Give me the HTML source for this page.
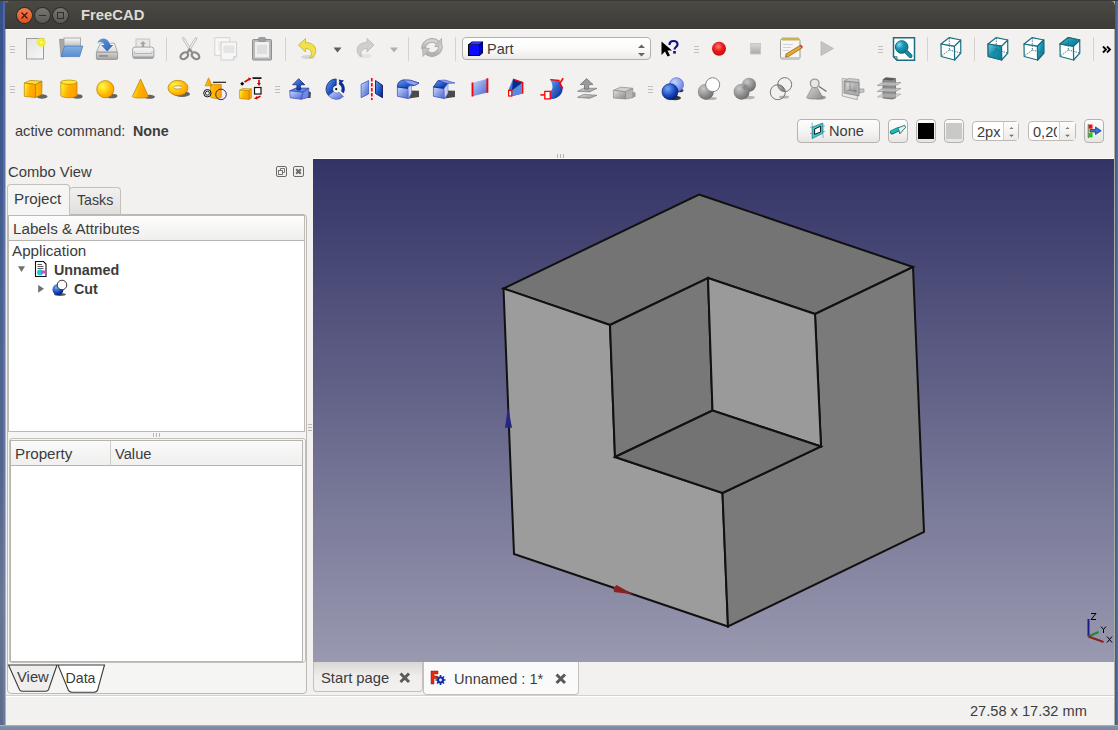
<!DOCTYPE html>
<html><head><meta charset="utf-8">
<style>
*{box-sizing:border-box;margin:0;padding:0}
html,body{width:1118px;height:730px;overflow:hidden;background:#7d879c;font-family:"Liberation Sans",sans-serif;color:#3c3c3c;font-size:14.5px}
.a{position:absolute}
.t{position:absolute;white-space:nowrap;line-height:1}
svg{position:absolute;overflow:visible}
</style></head><body>
<!-- desktop -->
<div class="a" style="left:0;top:0;width:6px;height:730px;background:linear-gradient(90deg,transparent 0,transparent 3.5px,rgba(120,150,200,.35) 3.5px,rgba(120,150,200,.35) 5px,transparent 5px),linear-gradient(#35508a 0,#4b6191 300px,#55658c 480px,#6a7594 600px,#5d6a8a 730px)"></div>
<div class="a" style="left:5px;top:29px;width:1px;height:697px;background:#b5b1ab"></div>
<div class="a" style="left:1114px;top:0;width:4px;height:730px;background:linear-gradient(90deg,#b0aca8 0,#b0aca8 1px,#3d5a88 1px,#5575a5)"></div>
<div class="a" style="left:0;top:725px;width:1118px;height:5px;background:linear-gradient(#b0aca8 0,#b0aca8 1px,#8590aa 1px,#7a86a4)"></div>
<div class="a" style="left:0;top:0;width:1118px;height:1px;background:#3a3935"></div>
<!-- window -->
<div class="a" style="left:5px;top:1px;width:1110px;height:28px;background:linear-gradient(#4a4944,#3c3b37);border-radius:5px 5px 0 0"></div>
<div class="a" style="left:6px;top:29px;width:1108px;height:696px;background:#f2f1f0;border-top:1px solid #fff"></div>


<!-- titlebar buttons -->
<div class="a" style="left:16px;top:7px;width:17px;height:17px;border-radius:50%;background:#2e2d2a"></div>
<div class="a" style="left:17px;top:8px;width:15px;height:15px;border-radius:50%;background:linear-gradient(#f47c4f,#e0531f)"></div>
<svg style="left:17px;top:8px" width="15" height="15"><path d="M4.5 4.5L10.5 10.5M10.5 4.5L4.5 10.5" stroke="#3a1a10" stroke-width="1.2"/></svg>
<div class="a" style="left:34px;top:7px;width:17px;height:17px;border-radius:50%;background:#2e2d2a"></div>
<div class="a" style="left:35px;top:8px;width:15px;height:15px;border-radius:50%;background:linear-gradient(#77766f,#5a5954)"></div>
<div class="a" style="left:39px;top:15px;width:7px;height:1px;background:#2f2e2a"></div>
<div class="a" style="left:52px;top:7px;width:17px;height:17px;border-radius:50%;background:#2e2d2a"></div>
<div class="a" style="left:53px;top:8px;width:15px;height:15px;border-radius:50%;background:linear-gradient(#77766f,#5a5954)"></div>
<div class="a" style="left:57px;top:12px;width:7px;height:7px;border:1.3px solid #2f2e2a"></div>
<div class="t" style="left:81px;top:7.5px;font-size:14.8px;font-weight:bold;color:#dfdbd2">FreeCAD</div>

<!-- toolbar row1 -->
<div class="a" style="left:10px;top:46px;width:5px;height:8px;background:repeating-linear-gradient(#c2bfba 0,#c2bfba 1px,transparent 1px,transparent 3px)"></div><div class="a" style="left:10px;top:86px;width:5px;height:8px;background:repeating-linear-gradient(#c2bfba 0,#c2bfba 1px,transparent 1px,transparent 3px)"></div><div class="a" style="left:694px;top:46px;width:5px;height:8px;background:repeating-linear-gradient(#c2bfba 0,#c2bfba 1px,transparent 1px,transparent 3px)"></div><div class="a" style="left:878px;top:46px;width:5px;height:8px;background:repeating-linear-gradient(#c2bfba 0,#c2bfba 1px,transparent 1px,transparent 3px)"></div><div class="a" style="left:275px;top:86px;width:5px;height:8px;background:repeating-linear-gradient(#c2bfba 0,#c2bfba 1px,transparent 1px,transparent 3px)"></div><div class="a" style="left:648px;top:86px;width:5px;height:8px;background:repeating-linear-gradient(#c2bfba 0,#c2bfba 1px,transparent 1px,transparent 3px)"></div>
<div class="a" style="left:166px;top:37px;width:1px;height:24px;background:#d6d3ce"></div><div class="a" style="left:285px;top:37px;width:1px;height:24px;background:#d6d3ce"></div><div class="a" style="left:408px;top:37px;width:1px;height:24px;background:#d6d3ce"></div><div class="a" style="left:455px;top:37px;width:1px;height:24px;background:#d6d3ce"></div><div class="a" style="left:927px;top:37px;width:1px;height:24px;background:#d6d3ce"></div><div class="a" style="left:974px;top:37px;width:1px;height:24px;background:#d6d3ce"></div><div class="a" style="left:1093px;top:37px;width:1px;height:24px;background:#d6d3ce"></div>
<!-- ICONS1 -->
<svg style="left:24px;top:37px" width="24" height="24">
<defs><linearGradient id="pg" x1="0" y1="0" x2="1" y2="1"><stop offset="0" stop-color="#e2e2e2"/><stop offset="1" stop-color="#f8f8f8"/></linearGradient>
<radialGradient id="glow"><stop offset="0" stop-color="#ffffe0"/><stop offset=".3" stop-color="#f8f020"/><stop offset=".7" stop-color="#f2ea30" stop-opacity=".8"/><stop offset="1" stop-color="#f2ea30" stop-opacity="0"/></radialGradient></defs>
<rect x="2.5" y="1.5" width="17" height="20.5" fill="url(#pg)" stroke="#9a9a9a"/>
<rect x="3" y="22" width="17" height="1" fill="#c8c8c8"/>
<circle cx="17.3" cy="5.3" r="5.5" fill="url(#glow)"/>
</svg>
<svg style="left:59px;top:37px" width="25" height="24">
<defs><linearGradient id="fb" x1="0" y1="0" x2="0" y2="1"><stop offset="0" stop-color="#86b0e0"/><stop offset="1" stop-color="#5a8ed0"/></linearGradient>
<linearGradient id="fp" x1="0" y1="0" x2="0" y2="1"><stop offset="0" stop-color="#fafafa"/><stop offset="1" stop-color="#b8b8b8"/></linearGradient></defs>
<path d="M0.5 2.3H5.5V19.6H2z" fill="#a8a8a8" stroke="#8a8a8a" stroke-width=".7"/>
<rect x="5" y="1" width="16.5" height="9" fill="url(#fp)" stroke="#9a9a9a" stroke-width=".8"/>
<path d="M2.1 19.6L5.6 9.1H23.8L20.6 19.6z" fill="url(#fb)" stroke="#4a7ec0" stroke-width=".8"/>
</svg>
<svg style="left:96px;top:37px" width="24" height="24">
<defs><linearGradient id="dr" x1="0" y1="0" x2="0" y2="1"><stop offset="0" stop-color="#f4f4f4"/><stop offset="1" stop-color="#dcdcdc"/></linearGradient>
<linearGradient id="dr2" x1="0" y1="0" x2="0" y2="1"><stop offset="0" stop-color="#d4d4d4"/><stop offset="1" stop-color="#a4a4a4"/></linearGradient>
<linearGradient id="arw" x1="0" y1="0" x2="1" y2="1"><stop offset="0" stop-color="#6a9ad8"/><stop offset="1" stop-color="#2a62b8"/></linearGradient></defs>
<path d="M4.3 6.2H18.4L21.6 15.2H0.4z" fill="url(#dr)" stroke="#a0a0a0" stroke-width=".8"/>
<rect x="0.4" y="15.2" width="21.2" height="7.2" rx="1" fill="url(#dr2)" stroke="#8a8a8a" stroke-width=".8"/>
<rect x="3" y="18" width="9" height="1.8" fill="#909090"/>
<path d="M1.2 6.4C3 1.5 9 -0.5 12.5 4.5L14.5 8H17.2L11.2 14.5 5 8H8.2C7.5 5 4 4 1.2 6.4z" fill="url(#arw)"/>
</svg>
<svg style="left:132px;top:37px" width="24" height="24">
<defs><linearGradient id="pr" x1="0" y1="0" x2="0" y2="1"><stop offset="0" stop-color="#f6f6f6"/><stop offset=".6" stop-color="#e4e4e4"/><stop offset="1" stop-color="#c0c0c0"/></linearGradient></defs>
<rect x="4" y="2" width="13.8" height="10" fill="#e8e8e8" stroke="#b8b8b8" stroke-width=".8"/>
<path d="M11 4L8 7H9.8V11H12.2V7H14z" fill="#a4a4a4"/>
<rect x="0.6" y="10.1" width="21.3" height="11.3" rx="2.5" fill="url(#pr)" stroke="#9a9a9a" stroke-width=".9"/>
<path d="M2.5 14.5V16.5H20V14.5" fill="none" stroke="#a8a8a8" stroke-width=".8"/>
<rect x="1" y="19.5" width="20.5" height="2" rx="1" fill="#a0a0a0"/>
</svg>
<svg style="left:178px;top:37px" width="24" height="24">
<path d="M4.2 1.2L5.8 0.5 14 13.5 12.6 15z" fill="#f4f4f4" stroke="#a8a8a8" stroke-width=".7"/>
<path d="M19.2 1.2L17.6 0.5 9.4 13.5 10.8 15z" fill="#f4f4f4" stroke="#a8a8a8" stroke-width=".7"/>
<ellipse cx="6.3" cy="18.8" rx="4.2" ry="2.9" transform="rotate(-35 6.3 18.8)" fill="none" stroke="#8a8a8a" stroke-width="2.2"/>
<ellipse cx="17.5" cy="18.8" rx="4.2" ry="2.9" transform="rotate(35 17.5 18.8)" fill="none" stroke="#8a8a8a" stroke-width="2.2"/>
<path d="M9.5 15.5L11.7 12.5 14 15.5" fill="none" stroke="#8a8a8a" stroke-width="2"/>
</svg>
<svg style="left:214px;top:37px" width="24" height="24">
<rect x="0.8" y="0.8" width="15" height="17.5" fill="#f8f8f8" stroke="#d4d4d4"/>
<path d="M4 5H7M4 7H7M4 9H7M4 11H7M4 13H7" stroke="#d8d8d8" stroke-width=".7"/>
<path d="M7 5H22.6V19.5L19.5 23H7z" fill="#f6f6f6" stroke="#cfcfcf"/>
<rect x="9.5" y="8.5" width="11" height="7.5" fill="#e4e4e4"/>
<path d="M19.5 23V19.5H22.6" fill="#e0e0e0" stroke="#cfcfcf" stroke-width=".7"/>
</svg>
<svg style="left:250px;top:37px" width="24" height="24">
<rect x="2.5" y="2.5" width="19" height="20.5" rx="1" fill="#b8b8b8" stroke="#8e8e8e"/>
<rect x="5" y="5" width="14" height="15.5" fill="#f0f0f0"/>
<rect x="8.5" y="0.5" width="7" height="4" rx="1" fill="#9e9e9e" stroke="#888" stroke-width=".6"/>
<rect x="7" y="8" width="10" height="9" fill="#dedede"/>
</svg>
<svg style="left:297px;top:37px" width="24" height="24">
<ellipse cx="11" cy="20" rx="7" ry="2" fill="#d6d5d2"/>
<path d="M1.5 8L8.5 1.5V5.5C16 5.5 20 10 18.5 16 17.5 19 15 21 12.5 21 15.5 18 15.5 11.5 8.5 11.5V15z" fill="#f2e04a" stroke="#c8b424" stroke-width=".8"/>
</svg>
<svg style="left:331px;top:46px" width="12" height="8"><path d="M2.5 1.5h8l-4 5z" fill="#5d5d5d"/></svg>
<svg style="left:355px;top:37px" width="24" height="24">
<ellipse cx="10" cy="19" rx="7" ry="2" fill="#e4e3e0"/>
<path d="M19 8L12 1.5V5.5C4.5 5.5 1 10 2.5 15.5 3.5 18 5.5 19.5 7 19.5 5 16.5 5.5 11.5 12 11.5V15z" fill="#cfcfcf" stroke="#b6b6b6" stroke-width=".8"/>
</svg>
<svg style="left:388px;top:46px" width="12" height="8"><path d="M2 1.5h8l-4 5z" fill="#b0b0b0"/></svg>
<svg style="left:420px;top:37px" width="24" height="24">
<defs><linearGradient id="rf" x1="0" y1="0" x2="0" y2="1"><stop offset="0" stop-color="#d4d4d4"/><stop offset="1" stop-color="#b0b0b0"/></linearGradient></defs>
<path d="M3.5 12A8.5 8.5 0 0 1 18 6" fill="none" stroke="#a8a8a8" stroke-width="4.6"/>
<path d="M3.5 12A8.5 8.5 0 0 1 18 6" fill="none" stroke="url(#rf)" stroke-width="3"/>
<path d="M14.5 9.5L22 10.2 21.5 1.5z" fill="#c4c4c4" stroke="#a8a8a8" stroke-width=".8"/>
<path d="M20.5 9A8.5 8.5 0 0 1 6 15" fill="none" stroke="#a8a8a8" stroke-width="4.6"/>
<path d="M20.5 9A8.5 8.5 0 0 1 6 15" fill="none" stroke="url(#rf)" stroke-width="3"/>
<path d="M9.5 11.5L2.5 10.8 3 19.5z" fill="#c4c4c4" stroke="#a8a8a8" stroke-width=".8"/>
</svg>
<svg style="left:659px;top:37px" width="24" height="24">
<path d="M2.5 4.5V18L6 14.5 8.5 19.5 11 18.5 8.5 13.5H13z" fill="#000"/>
<path d="M10.5 8C10.5 5 12.5 4 14.5 4S18.5 5 18.5 7.5C18.5 10 15.5 10 15.5 12.5" fill="none" stroke="#101080" stroke-width="2.2"/>
<rect x="14.2" y="14" width="2.6" height="2.6" fill="#101080"/>
</svg>
<svg style="left:707px;top:37px" width="24" height="24">
<defs><radialGradient id="rec" cx=".45" cy=".35" r=".7"><stop offset="0" stop-color="#ff7a7a"/><stop offset=".5" stop-color="#e81818"/><stop offset="1" stop-color="#c80808"/></radialGradient></defs>
<circle cx="12" cy="11.7" r="7" fill="url(#rec)"/>
</svg>
<svg style="left:743px;top:37px" width="24" height="24">
<defs><linearGradient id="stp" x1="0" y1="0" x2="0" y2="1"><stop offset="0" stop-color="#d8d8d8"/><stop offset="1" stop-color="#a8a8a8"/></linearGradient></defs>
<rect x="7.5" y="6.5" width="10" height="10.5" fill="url(#stp)" stroke="#c8c8c8"/>
</svg>
<svg style="left:779px;top:37px" width="25" height="24">
<rect x="1.5" y="2" width="19.5" height="20" rx="1.5" fill="#f6f6f4" stroke="#9a9a9a"/>
<rect x="1.5" y="20" width="19.5" height="2.5" fill="#c8c8c8"/>
<rect x="3" y="0.5" width="17" height="3" fill="#c9b35a"/>
<path d="M4 7.5h10M4 10.5h8M4 13.5h6" stroke="#c8c8c8" stroke-width=".8"/>
<path d="M7 17L21 8.5 23 11 9.5 19.5 6.5 20z" fill="#e8a830" stroke="#8a5a10" stroke-width=".7"/>
<path d="M21 8.5L23 11 24 10 22 7.5z" fill="#d83030"/>
</svg>
<svg style="left:815px;top:37px" width="24" height="24">
<path d="M6 4.5L18.5 11.5 6 18.5z" fill="#c4c4c4" stroke="#b0b0b0" stroke-width=".7"/>
</svg>
<svg style="left:891px;top:37px" width="25" height="25">
<path d="M2.5 0.7H23.5V23.3H6L2.5 19.8z" fill="#fff" stroke="#1d6d80" stroke-width="1.5"/>
<path d="M2.5 19.8H6V23.3" fill="none" stroke="#1d6d80" stroke-width="1"/>
<defs><radialGradient id="mag" cx=".3" cy=".3" r=".8"><stop offset="0" stop-color="#80d8f4"/><stop offset=".45" stop-color="#1596b0"/><stop offset="1" stop-color="#087890"/></radialGradient></defs>
<circle cx="10.7" cy="10" r="6.3" fill="url(#mag)" stroke="#176478" stroke-width="1"/>
<path d="M15.5 15L19.5 19" stroke="#176478" stroke-width="4" stroke-linecap="round"/><path d="M15.5 15L19.5 19" stroke="#1596b0" stroke-width="2.4" stroke-linecap="round"/>
</svg>
<svg style="left:939px;top:37px" width="25" height="25"><defs><linearGradient id="cg939" x1="0" y1="0" x2="1" y2="1"><stop offset="0" stop-color="#6ccaea"/><stop offset=".5" stop-color="#1790aa"/><stop offset="1" stop-color="#0a7d96"/></linearGradient></defs><g fill="#fff" stroke="#1a6e80" stroke-width="1.2" stroke-linejoin="round"><polygon points="2,7 15.5,9.2 15.6,23 2.2,19.5"/><polygon points="15.5,9.2 21.7,3 21.8,16 15.6,23"/><polygon points="2,7 10.3,0.6 21.7,3 15.5,9.2"/></g><path d="M10.3 1L10.3 13M10.3 13L2.5 19M10.3 13L21.5 15.8" stroke="#1a6e80" stroke-width=".9" stroke-dasharray="1.4 1.1" fill="none"/></svg>
<svg style="left:986px;top:37px" width="25" height="25"><defs><linearGradient id="cg986" x1="0" y1="0" x2="1" y2="1"><stop offset="0" stop-color="#6ccaea"/><stop offset=".5" stop-color="#1790aa"/><stop offset="1" stop-color="#0a7d96"/></linearGradient></defs><g fill="#fff" stroke="#1a6e80" stroke-width="1.2" stroke-linejoin="round"><polygon points="2,7 15.5,9.2 15.6,23 2.2,19.5"/><polygon points="15.5,9.2 21.7,3 21.8,16 15.6,23"/><polygon points="2,7 10.3,0.6 21.7,3 15.5,9.2"/></g><polygon points="2,7 15.5,9.2 15.6,23 2.2,19.5" fill="url(#cg986)" stroke="#1a6e80" stroke-width="1.2" stroke-linejoin="round"/><path d="M10.3 1L10.3 13M10.3 13L2.5 19M10.3 13L21.5 15.8" stroke="#1a6e80" stroke-width=".9" stroke-dasharray="1.4 1.1" fill="none"/></svg>
<svg style="left:1022px;top:37px" width="25" height="25"><defs><linearGradient id="cg1022" x1="0" y1="0" x2="1" y2="1"><stop offset="0" stop-color="#6ccaea"/><stop offset=".5" stop-color="#1790aa"/><stop offset="1" stop-color="#0a7d96"/></linearGradient></defs><g fill="#fff" stroke="#1a6e80" stroke-width="1.2" stroke-linejoin="round"><polygon points="2,7 15.5,9.2 15.6,23 2.2,19.5"/><polygon points="15.5,9.2 21.7,3 21.8,16 15.6,23"/><polygon points="2,7 10.3,0.6 21.7,3 15.5,9.2"/></g><polygon points="15.5,9.2 21.7,3 21.8,16 15.6,23" fill="url(#cg1022)" stroke="#1a6e80" stroke-width="1.2" stroke-linejoin="round"/><path d="M10.3 1L10.3 13M10.3 13L2.5 19M10.3 13L21.5 15.8" stroke="#1a6e80" stroke-width=".9" stroke-dasharray="1.4 1.1" fill="none"/></svg>
<svg style="left:1058px;top:37px" width="25" height="25"><defs><linearGradient id="cg1058" x1="0" y1="0" x2="1" y2="1"><stop offset="0" stop-color="#6ccaea"/><stop offset=".5" stop-color="#1790aa"/><stop offset="1" stop-color="#0a7d96"/></linearGradient></defs><g fill="#fff" stroke="#1a6e80" stroke-width="1.2" stroke-linejoin="round"><polygon points="2,7 15.5,9.2 15.6,23 2.2,19.5"/><polygon points="15.5,9.2 21.7,3 21.8,16 15.6,23"/><polygon points="2,7 10.3,0.6 21.7,3 15.5,9.2"/></g><polygon points="2,7 10.3,0.6 21.7,3 15.5,9.2" fill="url(#cg1058)" stroke="#1a6e80" stroke-width="1.2" stroke-linejoin="round"/><path d="M10.3 1L10.3 13M10.3 13L2.5 19M10.3 13L21.5 15.8" stroke="#1a6e80" stroke-width=".9" stroke-dasharray="1.4 1.1" fill="none"/></svg>
<svg style="left:1101px;top:45px" width="12" height="9"><path d="M2 1.5L5 4.5 2 7.5M6 1.5L9 4.5 6 7.5" fill="none" stroke="#000" stroke-width="1.8"/></svg>

<div class="a" style="left:462px;top:37px;width:189px;height:23px;border:1px solid #b4b1ac;border-radius:4px;background:linear-gradient(#ffffff,#fbfbfa 50%,#eceae8)"></div>
<svg style="left:467px;top:40px" width="18" height="17"><path d="M1 4.5L5 1.5H16V13L12.5 16H1z" fill="#000"/><path d="M2 5H12V15H2z" fill="#0a0aff"/><path d="M12.5 5L15.5 2.5V12.5L12.5 15z" fill="#0000d0"/><path d="M2.5 4.5L5.5 2H15L12 4.5z" fill="#3030ff"/></svg>
<div class="t" style="left:487px;top:42px;font-size:14.5px;color:#3c3c3c">Part</div>
<svg style="left:637px;top:43px" width="9" height="15"><path d="M1 5L4.5 1.5 8 5z" fill="#666"/><path d="M1 10L4.5 13.5 8 10z" fill="#666"/></svg>
<!-- ICONS2 -->
<svg style="left:0;top:0" width="0" height="0"><defs>
<linearGradient id="yl" x1="0" y1="0" x2="1" y2=".3"><stop offset="0" stop-color="#ffff30"/><stop offset=".55" stop-color="#ffb000"/><stop offset="1" stop-color="#ffa000"/></linearGradient>
<linearGradient id="yl2" x1="0" y1="0" x2="1" y2="0"><stop offset="0" stop-color="#ffc000"/><stop offset="1" stop-color="#ff9c00"/></linearGradient>
<radialGradient id="ys" cx=".35" cy=".35" r=".75"><stop offset="0" stop-color="#ffff40"/><stop offset=".7" stop-color="#ffb000"/><stop offset="1" stop-color="#ff9800"/></radialGradient>
<linearGradient id="bl" x1="0" y1="0" x2="1" y2="1"><stop offset="0" stop-color="#c8d8ff"/><stop offset=".6" stop-color="#7a92e0"/><stop offset="1" stop-color="#4a62c8"/></linearGradient>
<linearGradient id="bd" x1="0" y1="0" x2="1" y2="1"><stop offset="0" stop-color="#6aa0f0"/><stop offset=".6" stop-color="#1a50c0"/><stop offset="1" stop-color="#002080"/></linearGradient>
<radialGradient id="bs" cx=".35" cy=".3" r=".75"><stop offset="0" stop-color="#70a8f8"/><stop offset=".6" stop-color="#1a4cc0"/><stop offset="1" stop-color="#001a80"/></radialGradient>
<radialGradient id="bsl" cx=".35" cy=".3" r=".75"><stop offset="0" stop-color="#c0d4ff"/><stop offset="1" stop-color="#6a82e0"/></radialGradient>
<radialGradient id="gs" cx=".35" cy=".3" r=".75"><stop offset="0" stop-color="#c8c8c8"/><stop offset="1" stop-color="#6a6a6a"/></radialGradient>
<linearGradient id="gg" x1="0" y1="0" x2="1" y2="1"><stop offset="0" stop-color="#e0e0e0"/><stop offset="1" stop-color="#8a8a8a"/></linearGradient>
</defs></svg>
<!-- box -->
<svg style="left:22px;top:77px" width="26" height="24">
<ellipse cx="20" cy="19.5" rx="5.5" ry="2.2" fill="#4a4a4a" opacity=".85"/>
<path d="M2.3 6.1L8.2 3.4 20 4.2 13.6 7.5z" fill="#ffe030" stroke="#b08000" stroke-width=".7"/>
<path d="M13.6 7.5L20 4.2 19.7 17.4 13.6 20.6z" fill="url(#yl2)" stroke="#b08000" stroke-width=".7"/>
<path d="M2.3 6.1L13.6 7.5V20.6L2.3 19.3z" fill="url(#yl)" stroke="#b08000" stroke-width=".7"/>
</svg>
<!-- cylinder -->
<svg style="left:58px;top:77px" width="26" height="24">
<ellipse cx="19.5" cy="19.5" rx="5" ry="2.2" fill="#4a4a4a" opacity=".85"/>
<path d="M2.8 5.2V18.5A8.1 2.2 0 0 0 19 18.5V5.2z" fill="url(#yl)" stroke="#b08000" stroke-width=".7"/>
<ellipse cx="10.9" cy="5.2" rx="8.1" ry="2.1" fill="#ffec30" stroke="#b08000" stroke-width=".7"/>
</svg>
<!-- sphere -->
<svg style="left:94px;top:77px" width="26" height="24">
<ellipse cx="17.5" cy="19" rx="6" ry="2.3" fill="#4a4a4a" opacity=".85"/>
<circle cx="11.3" cy="12.2" r="8.6" fill="url(#ys)" stroke="#b08000" stroke-width=".7"/>
</svg>
<!-- cone -->
<svg style="left:130px;top:77px" width="26" height="24">
<ellipse cx="19.5" cy="19.8" rx="5.5" ry="2" fill="#4a4a4a" opacity=".85"/>
<path d="M10.6 2.1L2.3 19.5A8 1.6 0 0 0 18.4 19.5z" fill="url(#yl)" stroke="#b08000" stroke-width=".7"/>
</svg>
<!-- torus -->
<svg style="left:166px;top:77px" width="26" height="24">
<ellipse cx="16" cy="17" rx="8" ry="3" fill="#4a4a4a" opacity=".85"/>
<ellipse cx="12" cy="10.9" rx="10" ry="7.6" fill="url(#ys)" stroke="#b08000" stroke-width=".7"/>
<ellipse cx="11.7" cy="10.4" rx="4.6" ry="1.7" fill="#f2f1f0" stroke="#b08000" stroke-width=".7"/>
</svg>
<!-- primitives -->
<svg style="left:202px;top:77px" width="26" height="25">
<path d="M8.6 8L12 7.2 19.3 7.6V20.5L15 21.8 8.6 20.5z" fill="url(#yl2)" stroke="#b08000" stroke-width=".6"/>
<path d="M6.6 0.8L3 8.8H10z" fill="url(#yl)" stroke="#b08000" stroke-width=".6"/>
<path d="M11 5.3H24" stroke="#222" stroke-width="1.2"/>
<circle cx="5.4" cy="16.2" r="3.7" fill="none" stroke="#111" stroke-width="1"/>
<circle cx="5.4" cy="16.2" r="2" fill="none" stroke="#111" stroke-width=".9"/>
<circle cx="19" cy="17.4" r="5.3" fill="none" stroke="#2a2a70" stroke-width="1"/>
</svg>
<!-- shapebuilder -->
<svg style="left:238px;top:77px" width="26" height="25">
<path d="M4.2 4.7L6.2 6.7 4.2 8.7 2.2 6.7z" fill="#000"/>
<path d="M6.5 5L11.5 2" stroke="#d80000" stroke-width="1.6"/><path d="M10 0.5L13.2 1.2 11.8 4z" fill="#d80000"/>
<path d="M14.5 1.1H23.5" stroke="#000" stroke-width="1.6"/>
<path d="M21 2.8V6.5" stroke="#d80000" stroke-width="1.6"/><path d="M19 6L21 9 23 6z" fill="#d80000"/>
<rect x="16.5" y="10.5" width="6.5" height="6.5" fill="#fff" stroke="#111" stroke-width="1.2"/>
<path d="M22.5 19.3L18.5 21" stroke="#d80000" stroke-width="1.6"/><path d="M19 19L16 21.8 19.5 22.6z" fill="#d80000"/>
<path d="M1.6 13.2L4.5 11.5 13.4 11.8 11 13.5z" fill="#ffe030" stroke="#b08000" stroke-width=".6"/>
<path d="M11 13.5L13.4 11.8V21L11 22.4z" fill="#ffa800" stroke="#b08000" stroke-width=".6"/>
<path d="M1.6 13.2L11 13.5V22.4L1.6 21.5z" fill="url(#yl)" stroke="#b08000" stroke-width=".6"/>
</svg>
<!-- extrude -->
<svg style="left:287px;top:77px" width="26" height="24">
<path d="M21.6 14L24 15.5 23.5 21 20 21z" fill="#4a4a4a"/>
<path d="M2.7 13.9L9 11 21.8 11.2 15.9 15.2z" fill="#5a86e8" stroke="#1a2a90" stroke-width=".7"/>
<path d="M15.9 15.2L21.8 11.2 21.5 20.3 14.3 22.3z" fill="#7088e0" stroke="#3a4ac0" stroke-width=".7"/>
<path d="M2.7 13.9L15.9 15.2 14.3 22.3 3.2 20.8z" fill="url(#bl)" stroke="#3a4ac0" stroke-width=".7"/>
<path d="M11.7 1.7L5.6 7.8H9.9V13H13.4V7.8H17.8z" fill="url(#bd)" stroke="#0a1a70" stroke-width=".7"/>
</svg>
<!-- revolve -->
<svg style="left:323px;top:77px" width="26" height="25">
<path d="M13.2 2A10.1 10.1 0 0 0 5.5 18.6L10.5 14.6A3.8 3.8 0 0 1 13.2 8.3z" fill="url(#bd)" stroke="#0a1a60" stroke-width=".7"/>
<path d="M5.5 18.6A10.1 10.1 0 0 0 20.5 19.5L16 15.2A3.8 3.8 0 0 1 10.5 14.6z" fill="url(#bl)" stroke="#4a5ac8" stroke-width=".6"/>
<path d="M17 4.5A8.5 8.5 0 0 1 20.5 16L18.5 14.2A6 6 0 0 0 16 7z" fill="#0a30a0" stroke="#001a70" stroke-width=".6"/>
<path d="M15.5 2.5L21 3.5 17.5 7z" fill="#0a30a0"/>
<circle cx="13.2" cy="12.1" r="1.1" fill="#000"/>
</svg>
<!-- mirror -->
<svg style="left:359px;top:77px" width="26" height="25">
<path d="M2.1 7.2L9.6 3.5V17L2.1 20.7z" fill="url(#bl)" stroke="#3a4ac0" stroke-width=".7"/>
<path d="M16.5 3.5L23.5 8.2V20.7L16.5 16.5z" fill="url(#bd)" stroke="#000850" stroke-width=".8"/>
<path d="M12.8 1V23" stroke="#ff0000" stroke-width="1.7" stroke-dasharray="3.5 1.5"/>
</svg>
<!-- fillet -->
<svg style="left:395px;top:77px" width="26" height="24">
<path d="M13.5 13.5L24 13.7V20L13.8 21.5z" fill="#4a4a4a"/>
<path d="M2.4 10L13.1 11.4 13.6 21.7 2.4 19.3z" fill="url(#bl)" stroke="#3a4ac0" stroke-width=".7"/>
<path d="M2.4 10C2.4 6 4 4 8 3L15 3.2 24 6 19.5 8.5 15.5 8.8C13.5 9.2 13.1 10.5 13.1 11.4z" fill="url(#bd)" stroke="#0a1a70" stroke-width=".7"/>
<path d="M8 3L15 3.2 24 6 19.5 8.5 13 6.5z" fill="#8aa0f0" stroke="#3a4ac0" stroke-width=".6"/>
<path d="M13.1 11.4C13.1 10 14.5 8.5 16.5 8.5V16L13.6 21.7z" fill="#c8d0f8" stroke="#5a6ad0" stroke-width=".5"/>
</svg>
<!-- chamfer -->
<svg style="left:431px;top:77px" width="26" height="24">
<path d="M13.5 13.5L24 13.7V20L13.8 21.5z" fill="#4a4a4a"/>
<path d="M2.4 10L13.1 11.4 13.6 21.7 2.4 19.3z" fill="url(#bl)" stroke="#3a4ac0" stroke-width=".7"/>
<path d="M2.4 10L7 3.5 17 6.5 13.1 11.4z" fill="url(#bd)" stroke="#0a1a70" stroke-width=".7"/>
<path d="M7 3.5L14 3 24 6 17 6.5z" fill="#8aa0f0" stroke="#3a4ac0" stroke-width=".6"/>
<path d="M13.1 11.4L17 6.5V16L13.6 21.7z" fill="#c8d0f8" stroke="#5a6ad0" stroke-width=".5"/>
</svg>
<!-- ruled -->
<svg style="left:467px;top:77px" width="26" height="24">
<path d="M5.5 5.8L20.4 1.7V15.6L5.5 19.3z" fill="url(#bl)"/>
<path d="M5.5 5.5V19.5M20.4 1.2V15.8" stroke="#ff0000" stroke-width="1.9"/>
</svg>
<!-- loft -->
<svg style="left:503px;top:77px" width="26" height="24">
<path d="M10 2.1L19.7 5.4V16.5L8.6 19.3 5.3 18.4V13.3z" fill="url(#bd)"/>
<path d="M10 2.1L19.7 5.4 9 13.5z" fill="#0a2a90"/>
<path d="M19.7 5.4L9 13.5 8.6 19.3 19.7 16.5z" fill="#5a8ae0"/>
<path d="M10 2.1L19.7 5.4V16.5" fill="none" stroke="#ff0000" stroke-width="1.3"/>
<rect x="5.6" y="13.5" width="3.2" height="5.5" fill="#fff" stroke="#ff0000" stroke-width="1.2"/>
</svg>
<!-- sweep -->
<svg style="left:539px;top:77px" width="26" height="25">
<path d="M11.2 2.6L20.5 3.5 23.7 11.4C23.5 18 18 22 11.2 22.1V14.2C14 13 14.5 9 11.2 2.6z" fill="url(#bd)"/>
<path d="M11.2 2.6L20.5 3.5" stroke="#ff0000" stroke-width="1.4"/>
<path d="M24.2 1.2L20.8 6.2 23.7 11.4" fill="none" stroke="#ff0000" stroke-width="1.6"/>
<rect x="5.8" y="14.4" width="5.4" height="7.5" fill="#fff" stroke="#ff0000" stroke-width="1.3"/>
<path d="M1.4 17.9H5.6" stroke="#ff0000" stroke-width="1.6"/>
<path d="M13 19C17 18 20 14 21 9" fill="none" stroke="#8a4a9a" stroke-width=".8" stroke-dasharray="1.5 1"/>
</svg>
<!-- offset -->
<svg style="left:575px;top:77px" width="26" height="24">
<path d="M2.5 20.4L8.6 17.4 22 18.3 14.6 21.3z" fill="url(#gg)" stroke="#7a7a7a" stroke-width=".7"/>
<path d="M2.5 14.3L8.6 11.3 22 11.3 14.6 14.9z" fill="url(#gg)" stroke="#7a7a7a" stroke-width=".7"/>
<path d="M11.6 1.6L5.2 7.6H9.5V12.2H13.7V7.6H18z" fill="#9a9a9a" stroke="#6a6a6a" stroke-width=".7"/>
</svg>
<!-- thickness -->
<svg style="left:611px;top:77px" width="26" height="24">
<path d="M21.8 15L24.5 15.5V19.5L21.8 20.7z" fill="#9a9a9a"/>
<path d="M2.4 13.4L9.7 10.1 21.8 11.3 14.5 14.8z" fill="#d0d0d0" stroke="#8a8a8a" stroke-width=".7"/>
<path d="M14.5 14.8L21.8 11.3V20.7L14.5 22z" fill="#b4b4b4" stroke="#8a8a8a" stroke-width=".7"/>
<path d="M2.4 13.4L14.5 14.8V22L2.4 21z" fill="url(#gg)" stroke="#8a8a8a" stroke-width=".7"/>
</svg>
<!-- boolean -->
<svg style="left:659px;top:77px" width="26" height="25">
<ellipse cx="20" cy="13.5" rx="4.5" ry="1.8" fill="#333"/>
<circle cx="17.5" cy="7.7" r="7" fill="url(#bsl)" stroke="#5a5ae0" stroke-width=".7"/>
<ellipse cx="16" cy="21" rx="6" ry="2.2" fill="#333"/>
<circle cx="11" cy="14.7" r="8" fill="url(#bs)" stroke="#001060" stroke-width=".6"/>
</svg>
<!-- cut -->
<svg style="left:695px;top:77px" width="26" height="25">
<ellipse cx="15" cy="21.5" rx="7" ry="1.6" fill="#8a8a8a" opacity=".6"/>
<circle cx="10.8" cy="14.7" r="8" fill="url(#gs)"/>
<circle cx="17.7" cy="7.7" r="7" fill="#fff" stroke="#7a7a7a" stroke-width=".9"/>
</svg>
<!-- fuse -->
<svg style="left:731px;top:77px" width="26" height="25">
<ellipse cx="17" cy="20.5" rx="7" ry="1.8" fill="#8a8a8a" opacity=".6"/>
<circle cx="18" cy="7.7" r="7" fill="url(#gs)"/>
<circle cx="10.6" cy="14.7" r="8" fill="url(#gs)"/>
<path d="M13 9L16 12" stroke="#8a8a8a" stroke-width="5"/>
</svg>
<!-- common -->
<svg style="left:767px;top:77px" width="26" height="25">
<ellipse cx="17" cy="20" rx="5" ry="1.5" fill="#8a8a8a" opacity=".6"/>
<clipPath id="cc"><circle cx="17.7" cy="7.6" r="7"/></clipPath>
<circle cx="10.8" cy="15.2" r="7.5" fill="url(#gs)" clip-path="url(#cc)"/>
<circle cx="10.8" cy="15.2" r="7.5" fill="none" stroke="#6a6a6a" stroke-width=".9"/>
<circle cx="17.7" cy="7.6" r="7" fill="none" stroke="#6a6a6a" stroke-width=".9"/>
</svg>
<!-- shapeinfo -->
<svg style="left:803px;top:77px" width="26" height="25">
<ellipse cx="17" cy="20.5" rx="6" ry="2" fill="#9a9a9a"/>
<path d="M11.6 6L3.6 20.5A8.2 1.8 0 0 0 19.9 20.5z" fill="url(#gg)" stroke="#7a7a7a" stroke-width=".6"/>
<circle cx="11.7" cy="6.4" r="4.3" fill="#e8e8e8" stroke="#9a9a9a" stroke-width="1.4"/>
<path d="M16 9.5L23.5 14.5" stroke="#6a6a6a" stroke-width="1.2"/>
</svg>
<!-- section -->
<svg style="left:839px;top:77px" width="26" height="25">
<path d="M3.3 1.4L18.3 4V22.7L3.3 19z" fill="#e8e8e8" stroke="#9a9a9a" stroke-width=".8"/>
<path d="M5 4L10 1.4 20 2.5V16L25 15V12L20 12" fill="#c8c8c8" stroke="#8a8a8a" stroke-width=".6"/>
<path d="M5 4L20 5.5V18.9L5 16z" fill="#b0b0b0" stroke="#7a7a7a" stroke-width=".7"/>
<path d="M7.5 6L17.5 7V16L7.5 14z" fill="url(#gg)"/>
<path d="M11 6.5V13L7.5 14M11 13L17.5 14" stroke="#6a6a6a" stroke-width=".6" fill="none"/>
</svg>
<!-- cross sections -->
<svg style="left:875px;top:77px" width="28" height="25">
<path d="M8 2.5L11 0.8 20.5 1.5V21L17 22 8 21z" fill="#8a8a8a" stroke="#5a5a5a" stroke-width=".7"/>
<path d="M8 2.5L11 0.8 20.5 1.5 17 3.5z" fill="#5a5a5a"/>
<path d="M2.3 8.5L8 5 26 5.5 20 9z" fill="#c0c0c0" fill-opacity=".8" stroke="#8a8a8a" stroke-width=".6"/>
<path d="M2.3 14.5L8 11 26 11.5 20 15z" fill="#c0c0c0" fill-opacity=".8" stroke="#8a8a8a" stroke-width=".6"/>
<path d="M2.3 20L8 16.5 26 17 20 20.5z" fill="#c0c0c0" fill-opacity=".6" stroke="#9a9a9a" stroke-width=".5"/>
</svg>

<!-- WIDGETS -->
<!-- active command -->
<div class="t" style="left:15px;top:124px;font-size:14.6px;color:#3c3c3c">active command:</div>
<div class="t" style="left:133px;top:124px;font-size:14.3px;font-weight:bold;color:#3c3c3c">None</div>
<!-- draft toolbar -->
<div class="a" style="left:797px;top:119px;width:83px;height:24px;border:1px solid #b6b3ae;border-radius:4px;background:linear-gradient(#fdfdfd,#f4f3f2 60%,#e6e5e3)"></div>
<svg style="left:810px;top:122px" width="17" height="18">
<path d="M2.2 5.2L12.8 1.1 13 11.1 2.2 16.5z" fill="#40d0d8" stroke="#1a7a80" stroke-width=".8" stroke-linejoin="round"/>
<path d="M4.6 7L10.6 4.2V10L4.6 12.4z" fill="#fff" stroke="#111" stroke-width="1"/>
<path d="M2.2 0.5V5M13 11.5V16M0 5.2H3.5M0 11.5H3.5M12 4H15M12 9.5H15" stroke="#3a8a98" stroke-width=".7" opacity=".8"/>
</svg>
<div class="t" style="left:829px;top:124px;font-size:14.6px;color:#3c3c3c">None</div>
<div class="a" style="left:888px;top:119px;width:20px;height:24px;border:1px solid #b6b3ae;border-radius:4px;background:linear-gradient(#fdfdfd,#f4f3f2 60%,#e6e5e3)"></div>
<svg style="left:889px;top:122px" width="18" height="16">
<path d="M3 10.2L9.5 7.3" stroke="#0a6a68" stroke-width="4.4" stroke-linecap="round"/>
<path d="M3 10L9.5 7.1" stroke="#12c4c0" stroke-width="2.8" stroke-linecap="round"/>
<path d="M8.8 6L15.6 3.3 16.6 5.3 10.8 11.9 10 8.5z" fill="#d8f6f0" stroke="#1a6a68" stroke-width=".9" stroke-linejoin="round"/>
</svg>
<div class="a" style="left:916px;top:119px;width:20px;height:24px;border:1px solid #b6b3ae;border-radius:4px;background:linear-gradient(#fdfdfd,#e6e5e3)"></div>
<div class="a" style="left:918px;top:123px;width:16px;height:16px;background:#000"></div>
<div class="a" style="left:944px;top:119px;width:20px;height:24px;border:1px solid #b6b3ae;border-radius:4px;background:linear-gradient(#fdfdfd,#e6e5e3)"></div>
<div class="a" style="left:946px;top:123px;width:16px;height:16px;background:#c9c9c9"></div>
<div class="a" style="left:972px;top:121px;width:47px;height:20px;border:1px solid #bdbab5;border-radius:4px;background:#fff"></div>
<div class="a" style="left:1003px;top:122px;width:15px;height:18px;border-left:1px solid #d4d1cc;background:linear-gradient(#fdfdfd,#ebeae8)"></div>
<svg style="left:1007px;top:124px" width="9" height="15"><path d="M2.5 5L4.5 3 6.5 5z" fill="#7a7a7a"/><path d="M2.2 10.8L4.5 13 6.8 10.8z" fill="#6a6a6a"/></svg>
<div class="t" style="left:977px;top:125px;font-size:14.6px;color:#3c3c3c">2px</div>
<div class="a" style="left:1028px;top:121px;width:48px;height:20px;border:1px solid #bdbab5;border-radius:4px;background:#fff;overflow:hidden"></div>
<div class="a" style="left:1033px;top:122px;width:24px;height:18px;overflow:hidden"><div class="t" style="left:0;top:3px;font-size:14.6px;color:#3c3c3c">0,20</div></div>
<div class="a" style="left:1059px;top:122px;width:16px;height:18px;border-left:1px solid #d4d1cc;background:linear-gradient(#fdfdfd,#ebeae8)"></div>
<svg style="left:1063px;top:124px" width="9" height="15"><path d="M2.5 5L4.5 3 6.5 5z" fill="#7a7a7a"/><path d="M2.2 10.8L4.5 13 6.8 10.8z" fill="#6a6a6a"/></svg>
<div class="a" style="left:1084px;top:119px;width:20px;height:24px;border:1px solid #b6b3ae;border-radius:4px;background:linear-gradient(#fdfdfd,#e6e5e3)"></div>
<svg style="left:1086px;top:123px" width="17" height="17">
<rect x="2.5" y="1.5" width="4" height="4.3" fill="#f01010"/><rect x="2.5" y="5.8" width="4" height="4.3" fill="#f0f010"/><rect x="2.5" y="10.1" width="4" height="4.3" fill="#10d010"/>
<path d="M2.2 1.2V14.5H3" fill="none" stroke="#555" stroke-width=".8"/>
<path d="M4 6.5H9.5V4L15.2 7.8 9.5 11.5V9H4z" fill="#3a70d8" stroke="#1a3a90" stroke-width=".8"/>
</svg>

<!-- combo view -->
<div class="t" style="left:8px;top:165px;font-size:14.8px;color:#3c3c3c">Combo View</div>
<svg style="left:276px;top:166px" width="29" height="12">
<rect x="0.5" y="0.5" width="10" height="10" rx="1.5" fill="none" stroke="#6a6a6a"/>
<rect x="2.5" y="4.5" width="4" height="4" fill="none" stroke="#6a6a6a" stroke-width=".9"/>
<path d="M4.5 4.5V2.5H8.5V6.5H6.5" fill="none" stroke="#6a6a6a" stroke-width=".9"/>
<rect x="17.5" y="0.5" width="10" height="10" rx="1.5" fill="none" stroke="#6a6a6a"/>
<path d="M20.2 3.2L24.8 7.8M24.8 3.2L20.2 7.8" stroke="#6a6a6a" stroke-width="2.1"/>
</svg>
<!-- tab widget pane -->
<div class="a" style="left:7px;top:214px;width:300px;height:480px;border:1px solid #bdbab5;border-radius:0 4px 4px 4px;background:#f5f5f4"></div>
<!-- Tasks tab -->
<div class="a" style="left:69px;top:187px;width:52px;height:27px;border:1px solid #c4c1bc;border-bottom:none;border-radius:4px 4px 0 0;background:linear-gradient(#f2f1f0,#e0dfdd)"></div>
<!-- Project tab -->
<div class="a" style="left:7px;top:184px;width:63px;height:30.5px;border:1px solid #c4c1bc;border-bottom:none;border-radius:4px 4px 0 0;background:#f5f5f4"></div>
<div class="t" style="left:14px;top:191px;font-size:15.2px;color:#3c3c3c">Project</div>
<div class="t" style="left:77px;top:193.3px;font-size:14.2px;color:#3c3c3c">Tasks</div>
<!-- tree -->
<div class="a" style="left:8px;top:215px;width:297px;height:217px;border:1px solid #bcb9b4;background:#fff"></div>
<div class="a" style="left:9px;top:216px;width:295px;height:25px;border-bottom:1px solid #b8b5b0;background:linear-gradient(#fdfdfd,#f0efee)"></div>
<div class="t" style="left:13px;top:221.3px;font-size:15.2px;color:#3c3c3c">Labels &amp; Attributes</div>
<div class="t" style="left:12px;top:243px;font-size:15.2px;color:#3c3c3c">Application</div>
<svg style="left:17px;top:265px" width="9" height="8"><path d="M1 1.2H8L4.5 7z" fill="#707070"/></svg>
<svg style="left:34px;top:260px" width="14" height="18">
<path d="M1.5 1.5H9.5L12 4V16.5H1.5z" fill="#fff" stroke="#111" stroke-width="1.1"/>
<path d="M3.5 4.5H8M3.5 6.5H9.5M3.5 8.5H9.5" stroke="#333" stroke-width=".8"/>
<circle cx="6" cy="12.5" r="3" fill="#20c8d8"/>
<rect x="7" y="10.5" width="4.5" height="3" fill="#e040e0"/>
</svg>
<div class="t" style="left:54px;top:263px;font-size:14.3px;font-weight:bold;color:#3c3c3c">Unnamed</div>
<svg style="left:37px;top:284px" width="8" height="10"><path d="M1.2 1L7 4.8 1.2 8.8z" fill="#707070"/></svg>
<svg style="left:51px;top:279px" width="18" height="18">
<ellipse cx="9" cy="15.5" rx="6" ry="1.5" fill="#555"/>
<circle cx="7" cy="10.5" r="5.5" fill="url(#bs)"/>
<circle cx="11" cy="6" r="4.8" fill="#fff" stroke="#222" stroke-width=".9"/>
</svg>
<div class="t" style="left:74px;top:282px;font-size:14.3px;font-weight:bold;color:#3c3c3c">Cut</div>
<!-- splitter grip -->
<div class="a" style="left:153px;top:433px;width:7px;height:4px;background:repeating-linear-gradient(90deg,#b8b5b0 0,#b8b5b0 1px,transparent 1px,transparent 3px)"></div>
<!-- property view -->
<div class="a" style="left:8.5px;top:438px;width:297px;height:225px;border:1px solid #c4c1bc;border-radius:3px;background:#f5f5f4"></div>
<div class="a" style="left:10px;top:440px;width:293px;height:222px;border:1px solid #b8b5b0;background:#fff"></div>
<div class="a" style="left:11px;top:441px;width:291px;height:25px;border-bottom:1px solid #b8b5b0;background:linear-gradient(#fafafa,#f0efee)"></div>
<div class="a" style="left:110px;top:441px;width:1px;height:24px;background:#d0cdc8"></div>
<div class="t" style="left:15px;top:446.3px;font-size:15.2px;color:#3c3c3c">Property</div>
<div class="t" style="left:115px;top:447px;font-size:14.7px;color:#3c3c3c">Value</div>
<!-- south tabs -->
<svg style="left:7px;top:663px" width="110" height="32">
<path d="M1.5 2L12.5 26.8C13.5 27.8 14.5 28.2 16 28.2H38C39.5 28.2 40.5 27.8 41.5 26.8L50 2z" fill="#efeeec" stroke="#3a3a3a" stroke-width="1.1"/>
<path d="M51 2L61.5 27.5C62.5 28.5 63.5 29.2 65 29.2H87C88.5 29.2 89.5 28.5 90.5 27.5L97.5 2z" fill="#fff" stroke="#3a3a3a" stroke-width="1.1"/>

</svg>
<div class="t" style="left:17px;top:670px;font-size:14.8px;color:#3c3c3c">View</div>
<div class="t" style="left:65.5px;top:671px;font-size:14.2px;color:#3c3c3c">Data</div>
<!-- dock splitter grip -->
<div class="a" style="left:308px;top:424px;width:4px;height:7px;background:repeating-linear-gradient(#b8b5b0 0,#b8b5b0 1px,transparent 1px,transparent 3px)"></div>
<div class="a" style="left:557px;top:154px;width:7px;height:4px;background:repeating-linear-gradient(90deg,#b8b5b0 0,#b8b5b0 1px,transparent 1px,transparent 3px)"></div>

<!-- MDI tabs -->
<div class="a" style="left:313px;top:662px;width:110px;height:30px;border:1px solid #c4c1bc;border-top:none;border-radius:0 0 4px 4px;background:linear-gradient(#d9d8d6,#efeeec 50%,#f2f1f0)"></div>
<div class="t" style="left:321px;top:671px;font-size:14.8px;color:#3c3c3c">Start page</div>
<svg style="left:398px;top:671px" width="14" height="14"><path d="M2.5 2.5L11 11M11 2.5L2.5 11" stroke="#5a5a5a" stroke-width="3"/></svg>
<div class="a" style="left:423px;top:662px;width:156px;height:33px;border:1px solid #c4c1bc;border-top:none;border-radius:0 0 4px 4px;background:#fafafa"></div>
<svg style="left:430px;top:670px" width="16" height="16">
<path d="M1 1H8V4H4V6H7V8.5H4V14H1z" fill="#e82a10"/>
<path d="M1 1H8V4H4V6H7V8.5H4V14H1z" fill="none" stroke="#8a1a00" stroke-width=".5"/>
<circle cx="10.5" cy="10" r="3.6" fill="#1030b0"/>
<path d="M10.5 5V15M5.5 10H15.5M7 6.5L14 13.5M14 6.5L7 13.5" stroke="#1030b0" stroke-width="1.6"/>
<circle cx="10.5" cy="10" r="1.4" fill="#fafafa"/>
</svg>
<div class="t" style="left:454px;top:671.5px;font-size:14.6px;color:#3c3c3c">Unnamed : 1*</div>
<svg style="left:554px;top:672px" width="14" height="14"><path d="M2.5 2.5L11 11M11 2.5L2.5 11" stroke="#5a5a5a" stroke-width="3"/></svg>

<!-- status bar -->
<div class="a" style="left:6px;top:695px;width:1108px;height:1px;background:#d4d1cc"></div>
<div class="a" style="left:6px;top:696px;width:1108px;height:1px;background:#fff"></div>
<div class="t" style="left:970px;top:704px;font-size:14.6px;color:#3c3c3c">27.58 x 17.32 mm</div>

<!-- viewport -->
<div class="a" style="left:313px;top:158px;width:801px;height:1px;background:#fff"></div>
<svg style="left:313px;top:159px" width="801" height="503" viewBox="313 159 801 503">
<defs><linearGradient id="bg" x1="0" y1="0" x2="0" y2="1"><stop offset="0" stop-color="#333366"/><stop offset="1" stop-color="#9999b0"/></linearGradient></defs>
<rect x="313" y="159" width="801" height="503" fill="url(#bg)"/>
<g stroke="#111" stroke-width="2" stroke-linejoin="miter">
<polygon points="699,194.5 913,267 815,314 708,278 610,325 503.5,288.5" fill="#747474"/>
<polygon points="503.5,288.5 610,325 615,457 722.5,493 728,626.5 514,554" fill="#9c9c9c"/>
<polygon points="913,267 924,532 728,626.5 722.5,493 821,446.5 815,314" fill="#7a7a7a"/>
<polygon points="610,325 708,278 712.5,410.5 615,457" fill="#787878"/>
<polygon points="708,278 815,314 821,446.5 712.5,410.5" fill="#9a9a9a"/>
<polygon points="615,457 712.5,410.5 821,446.5 722.5,493" fill="#737373"/>
</g>
<polygon points="508,407 505,427.8 512,427.8" fill="#262680"/>
<polygon points="616.5,585 613.5,588 614,592 633.5,594.5" fill="#8a2020"/>
</svg>
<svg style="left:1080px;top:608px" width="36" height="40" viewBox="1080 608 36 40">
<path d="M1088.5 636.5V619" stroke="#1a1a8a" stroke-width="2"/>
<path d="M1088.5 636.5L1098.5 632" stroke="#22882a" stroke-width="2"/>
<path d="M1088.5 636.5L1103.5 642" stroke="#8a2020" stroke-width="2"/>
<path d="M1091 613.5H1096L1091 619.5H1096" fill="none" stroke="#000" stroke-width="1"/>
<path d="M1101 626.5L1103.5 629.5 1106 626.5M1103.5 629.5V633" fill="none" stroke="#000" stroke-width="1"/>
<path d="M1107 636.5L1112 642.5M1112 636.5L1107 642.5" fill="none" stroke="#000" stroke-width="1"/>
</svg>
</body></html>
